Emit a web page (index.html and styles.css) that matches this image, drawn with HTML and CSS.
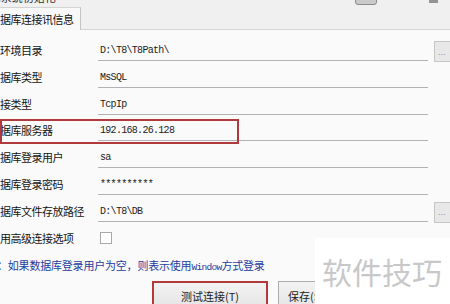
FILE: index.html
```html
<!DOCTYPE html>
<html lang="zh-CN">
<head>
<meta charset="utf-8">
<title>数据库连接讯信息</title>
<link rel="stylesheet" href="styles.css">
</head>
<body>
<div class="window">
  <div class="titlebar">
    <span class="title">T8系统初始化</span>
    <span class="tb-btn"></span>
    <span class="tb-mark"></span>
  </div>
  <div class="tabs">
    <div class="tab">据库连接讯信息</div>
  </div>
  <div class="panel">
    <div class="row"><span class="label">环境目录</span><span class="field">D:\T8\T8Path\</span><button class="browse">...</button></div>
    <div class="row"><span class="label">据库类型</span><span class="field">MsSQL</span></div>
    <div class="row"><span class="label">接类型</span><span class="field">TcpIp</span></div>
    <div class="row row-mark"><span class="label">据库服务器</span><span class="field">192.168.26.128</span></div>
    <div class="row"><span class="label">据库登录用户</span><span class="field">sa</span></div>
    <div class="row"><span class="label">据库登录密码</span><span class="field">**********</span></div>
    <div class="row"><span class="label">据库文件存放路径</span><span class="field">D:\T8\DB</span><button class="browse">...</button></div>
    <div class="row"><span class="label">用高级连接选项</span><span class="check"></span></div>
    <p class="note">：如果数据库登录用户为空，则表示使用<span class="latin">Window</span>方式登录</p>
    <div class="actions">
      <button class="btn btn-test">测试连接(<u>T</u>)</button>
      <button class="btn btn-save">保存(<u>S</u>)</button>
    </div>
  </div>
  <div class="watermark">软件技巧</div>
</div>
</body>
</html>
```
FILE: styles.css
```css
html, body {
  margin: 0;
  padding: 0;
}
body {
  width: 450px;
  height: 304px;
  overflow: hidden;
  background: #fafafa;
  font-family: "Noto Sans CJK SC", "Noto Sans", sans-serif;
  color: #1a1a1a;
}
.window {
  position: relative;
  width: 450px;
  height: 304px;
  overflow: hidden;
  background: #fafafa;
}
.titlebar {
  display: flex;
  align-items: flex-start;
  height: 7px;
  background: #f0f0f0;
}
.title {
  font-size: 11px;
  line-height: 11px;
  margin-top: -8px;
  margin-left: -12px;
  color: #333;
}
.tb-btn {
  margin-left: auto;
  margin-right: 52px;
  margin-top: -6px;
  width: 20px;
  height: 9px;
  border: 1px solid #8c8c8c;
  border-radius: 3px;
  background: #cacaca;
}
.tb-mark {
  width: 9px;
  height: 3px;
  margin-right: 12px;
  background: #555;
  opacity: 0.6;
}
.tabs {
  display: flex;
  align-items: flex-start;
  height: 22px;
  background: #f0f0f0;
  border-bottom: 1px solid #d6d6d6;
}
.tab {
  box-sizing: border-box;
  width: 81px;
  height: 23px;
  border-top: 1px solid #d4d4d4;
  border-right: 1px solid #c4c4c4;
  background: #f8f8f8;
  font-size: 11px;
  line-height: 22px;
  letter-spacing: -0.5px;
  white-space: nowrap;
  overflow: hidden;
  color: #111;
}
.panel {
  padding-top: 10px;
  background: #fafafa;
}
.row {
  display: grid;
  grid-template-columns: 92px 330px 24px;
  column-gap: 6px;
  align-items: start;
  height: 26.8px;
}
.label {
  font-size: 11px;
  line-height: 21px;
  letter-spacing: -0.5px;
  white-space: nowrap;
  color: #141414;
}
.field {
  height: 20px;
  border-bottom: 1px solid #b2b2b2;
  padding-left: 2px;
  font-family: "Liberation Mono", "DejaVu Sans Mono", monospace;
  font-size: 10px;
  letter-spacing: -0.7px;
  line-height: 21px;
  color: #222;
  white-space: nowrap;
}
.browse {
  box-sizing: border-box;
  height: 21px;
  width: 24px;
  margin: 1px 0 0;
  padding: 0 0 0 3px;
  text-align: left;
  border: 1px solid #c6c6c6;
  background: #e8e8e8;
  font-family: "Liberation Sans", sans-serif;
  font-size: 9px;
  color: #8a8a8a;
}
.row-mark {
  position: relative;
}
.row-mark::after {
  content: "";
  position: absolute;
  left: 0;
  top: -1.5px;
  width: 239px;
  height: 25px;
  box-sizing: border-box;
  border: 2px solid #b0393b;
}
.check {
  box-sizing: border-box;
  width: 12px;
  height: 12px;
  margin: 4.5px 0 0 2px;
  border: 1px solid #a9a9a9;
  background: #fff;
}
.note {
  margin: 2.6px 0 0 -3px;
  font-size: 11px;
  line-height: 16px;
  color: #1e3c9e;
  white-space: nowrap;
  letter-spacing: -0.2px;
}
.latin {
  font-family: "Liberation Mono", monospace;
  font-size: 9.5px;
  letter-spacing: -0.7px;
}
.actions {
  display: flex;
  gap: 10px;
  margin-top: 5px;
  padding-left: 152px;
}
.btn {
  box-sizing: border-box;
  height: 30px;
  border: 1px solid #acacac;
  background: linear-gradient(#f3f3f3, #e3e3e3);
  font-family: "Noto Sans CJK SC", sans-serif;
  font-size: 11px;
  color: #222;
  padding: 0;
}
.btn u {
  text-decoration: none;
}
.btn-test {
  position: relative;
  width: 116px;
}
.btn-test::after {
  content: "";
  position: absolute;
  inset: -1px;
  border: 2px solid #b3393b;
}
.btn-save {
  width: 70px;
  text-align: left;
  padding-left: 9px;
}
.watermark {
  position: absolute;
  left: 315px;
  top: 238px;
  right: 0;
  bottom: 0;
  display: flex;
  align-items: center;
  padding-left: 7px;
  background: #ffffff;
  font-family: "Noto Sans CJK SC", sans-serif;
  font-size: 30px;
  line-height: 1;
  color: #c8c8c8;
  white-space: nowrap;
}
```
